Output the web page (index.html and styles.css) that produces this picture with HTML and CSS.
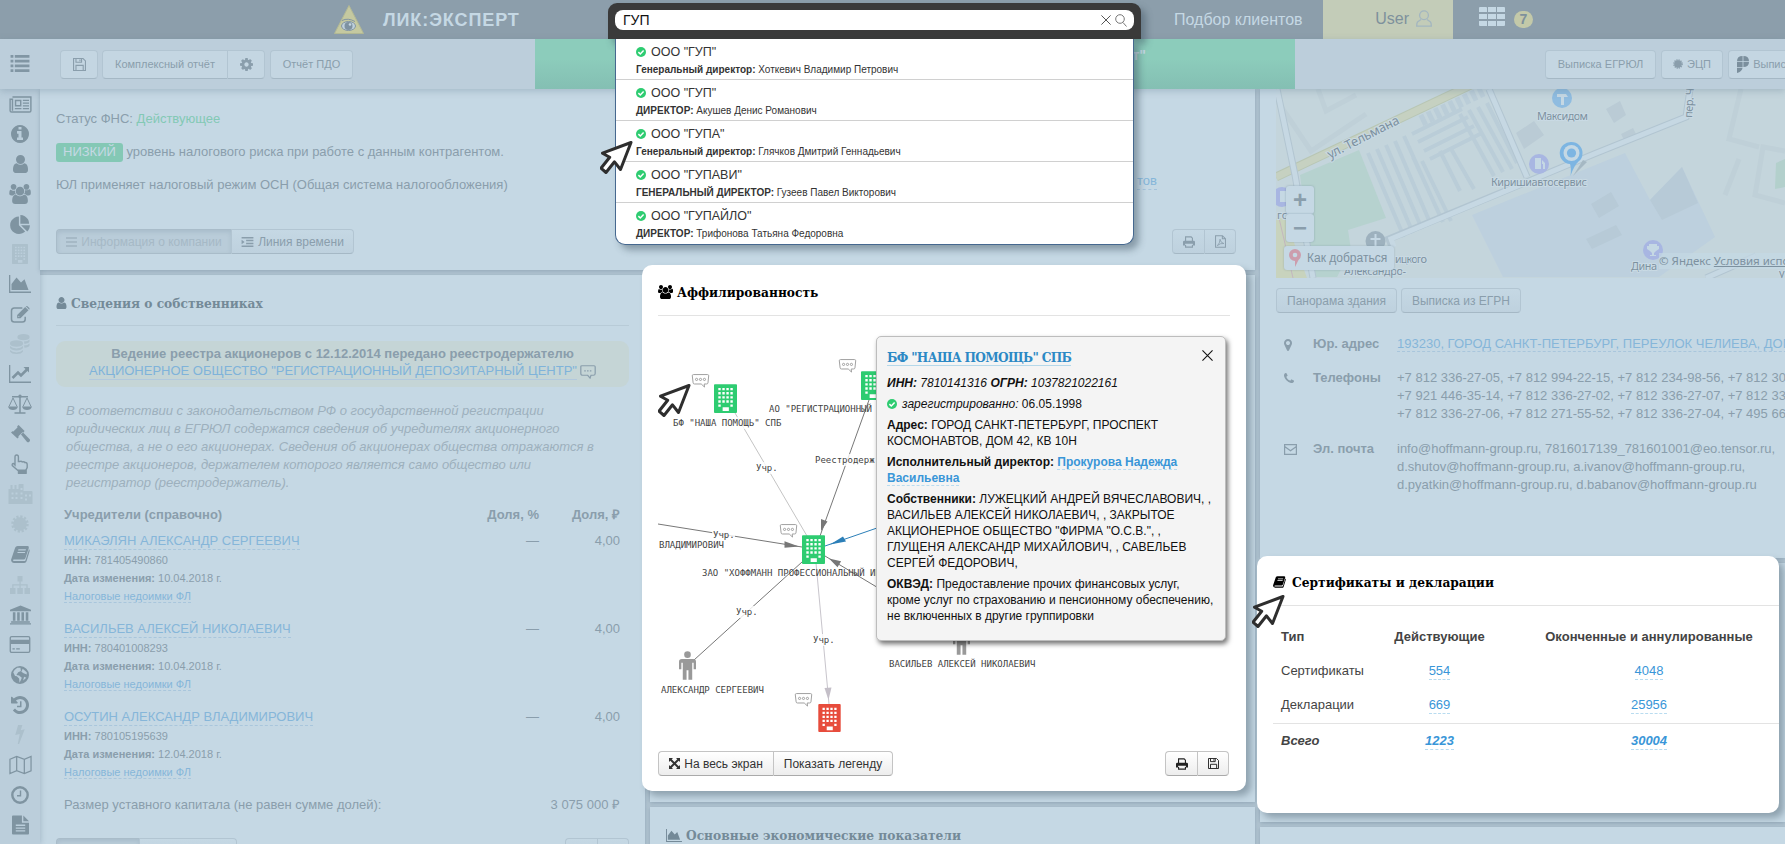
FILE: index.html
```html
<!DOCTYPE html>
<html lang="ru">
<head>
<meta charset="utf-8">
<title>ЛИК:ЭКСПЕРТ</title>
<link rel="stylesheet" href="styles.css">
</head>
<body>
<svg class="sprite" aria-hidden="true">
  <symbol id="list" viewBox="0 0 20 18"><path d="M0 0h3v3H0zM4.500 0H20v3H4.500zM0 5h3v3H0zM4.500 5H20v3H4.500zM0 10h3v3H0zM4.500 10H20v3H4.500zM0 15h3v3H0zM4.500 15H20v3H4.500z"/></symbol>
  <symbol id="news" viewBox="0 0 24 18"><path d="M3.500 1h19.500v14.500q0 1.500-1.500 1.500H2.500Q1 17 1 15.500V3.500h2.500v12" fill="none" stroke="currentColor" stroke-width="1.500"/><path fill-rule="evenodd" d="M6 4h7v7H6zM7.500 5.500v4h4v-4zM14.500 4H21v1.300h-6.500zM14.500 6.900H21v1.300h-6.500zM14.500 9.700H21V11h-6.500zM6 12.700h7V14H6zM14.500 12.700H21V14h-6.500z"/></symbol>
  <symbol id="info" viewBox="128 128 1536 1536"><path d="M1152 1376v-160q0-14-9-23t-23-9h-96v-512q0-14-9-23t-23-9h-320q-14 0-23 9t-9 23v160q0 14 9 23t23 9h96v320h-96q-14 0-23 9t-9 23v160q0 14 9 23t23 9h448q14 0 23-9t9-23zm-128-896v-160q0-14-9-23t-23-9h-192q-14 0-23 9t-9 23v160q0 14 9 23t23 9h192q14 0 23-9t9-23zm640 416q0 209-103 385.500t-279.500 279.500-385.500 103-385.500-103-279.500-279.500-103-385.500 103-385.500 279.500-279.500 385.500-103 385.500 103 279.500 279.500 103 385.500z"/></symbol>
  <symbol id="user" viewBox="256 128 1280 1536"><path d="M1536 1399q0 109-62.500 187t-150.500 78h-854q-88 0-150.500-78t-62.500-187q0-85 8.500-160.500t31.500-152 58.500-131 94-89 134.500-34.500q131 128 313 128t313-128q76 0 134.500 34.500t94 89 58.500 131 31.500 152 8.500 160.500zm-256-887q0 159-112.500 271.500t-271.500 112.500-271.500-112.500-112.500-271.500 112.500-271.500 271.500-112.500 271.500 112.500 112.500 271.500z"/></symbol>
  <symbol id="users" viewBox="-64 0 1920 1792"><path d="M529 896q-162 5-265 128h-134q-82 0-138-40.500t-56-118.500q0-353 124-353 6 0 43.500 21t97.500 42.500 119 21.500q67 0 133-23-5 37-5 66 0 159 93 287zm1071 637q0 120-73 189.500t-194 69.500h-874q-121 0-194-69.500t-73-189.500q0-53 3.500-103.500t14-109 26.500-108.500 43-97.500 62-81 85.500-53.500 111.500-20q10 0 43 21.500t73 48 107 48 135 21.500 135-21.500 107-48 73-48 43-21.500q61 0 111.500 20t85.500 53.500 62 81 43 97.500 26.500 108.500 14 109 3.500 103.500zm-1024-1277q0 106-75 181t-181 75-181-75-75-181 75-181 181-75 181 75 75 181zm704 384q0 159-112.500 271.500t-271.500 112.500-271.500-112.500-112.500-271.500 112.500-271.500 271.500-112.500 271.500 112.500 112.500 271.500zm576 225q0 78-56 118.500t-138 40.500h-134q-103-123-265-128 93-128 93-287 0-29-5-66 66 23 133 23 59 0 119-21.500t97.500-42.500 43.500-21q124 0 124 353zm-128-609q0 106-75 181t-181 75-181-75-75-181 75-181 181-75 181 75 75 181z"/></symbol>
  <symbol id="pie" viewBox="0 0 1728 1664"><path d="M768 890l546 546q-106 108-247.500 168t-298.500 60q-209 0-385.500-103t-279.500-279.500-103-385.500 103-385.500 279.500-279.500 385.500-103v762zm187 6h773q0 157-60 298.500t-168 247.500zm709-128h-768v-768q209 0 385.500 103t279.500 279.500 103 385.500z"/></symbol>
  <symbol id="building" viewBox="0 0 24 30"><path fill-rule="evenodd" d="M1 0h22q1 0 1 1v28q0 1-1 1H1q-1 0-1-1V1q0-1 1-1zM4.500 4h2.500v2.500H4.500zM8.700 4h2.500v2.500H8.700zM12.900 4h2.500v2.500h-2.500zM17.100 4h2.500v2.500h-2.500zM4.500 8.300h2.500v2.500H4.500zM8.700 8.300h2.500v2.500H8.700zM12.900 8.300h2.500v2.500h-2.500zM17.100 8.300h2.500v2.500h-2.500zM4.500 12.600h2.500v2.500H4.500zM8.700 12.600h2.500v2.500H8.700zM12.900 12.600h2.500v2.500h-2.500zM17.100 12.600h2.500v2.500h-2.500zM4.500 16.900h2.500v2.500H4.500zM8.700 16.900h2.500v2.500H8.700zM12.900 16.900h2.500v2.500h-2.500zM17.100 16.900h2.500v2.500h-2.500zM4.500 21.200h2.500v2.500H4.500zM17.100 21.200h2.500v2.500h-2.500zM9 24h6.500v4H9z"/></symbol>
  <symbol id="area" viewBox="0 0 22 18"><path d="M0 0h1.300v16.500H22V18H0zM2.500 15V9l5-6.500 4.500 5 3.500-3.200 4 10.700z"/></symbol>
  <symbol id="edit" viewBox="0 0 20 18"><path d="M12.500 2H4Q1 2 1 5v9q0 3 3 3h8.500q3 0 3-3v-2.500" fill="none" stroke="currentColor" stroke-width="1.600"/><path fill-rule="evenodd" d="M7 9.500L15.500 1l3.500 3.500-8.500 8.500H7zM8.300 10.200v1.500h1.500zM16.200.300q1-.8 2 .1l1.500 1.500q.8 1 0 2z"/></symbol>
  <symbol id="coins" viewBox="0 0 20 20"><path d="M7.500 2.500a6 2.500 0 0 1 12 0v1.200a6 2.500 0 0 1-12 0zM14 7.600q4 0 5.500-2v2q-1 2-5 2.300zM14 11.500q4 0 5.500-2v2q-1 2-5 2.300zM0 9a6.500 2.700 0 0 1 13 0v1a6.500 2.700 0 0 1-13 0zM0 12q2 2.400 6.500 2.400T13 12v2q-1.500 2.400-6.500 2.400T0 14zM0 16q2 2.400 6.500 2.400T13 16v1.500Q11.500 20 6.500 20T0 17.500z"/></symbol>
  <symbol id="line" viewBox="0 0 22 18"><path d="M0 0h1.300v16.500H22V18H0z"/><path d="M3.500 13l5.500-5.500 3 3L18 4.500" fill="none" stroke="currentColor" stroke-width="2.600"/><path d="M14.500 2H20v5.500z"/></symbol>
  <symbol id="scales" viewBox="0 0 24 20"><path d="M4 2.700h16M12 2v16.500M6.500 19h11" fill="none" stroke="currentColor" stroke-width="1.500"/><circle cx="12" cy="2.200" r="1.700"/><path d="M1 12.500L5 4l4 8.500M15 12.500L19 4l4 8.500" fill="none" stroke="currentColor"/><path d="M0 12.500h10q-1 3.500-5 3.500T0 12.500zM14 12.500h10q-1 3.500-5 3.500t-5-3.500z"/></symbol>
  <symbol id="gavel" viewBox="0 0 20 20"><path d="M6.500 1.200L8 0l6.300 6.300-1.200 1.500-1-.3-4.300 4.300.3 1-1.300 1.500L0 8l1.500-1.500 1 .4 4.300-4.300zM10.500 10l2.200-2.200 7 7.200q.8 1.300-.4 2.600-1.200 1-2.400.2z"/></symbol>
  <symbol id="hand" viewBox="0 0 18 20"><path d="M4 11V3q0-2 1.700-2t1.700 2v4.500h1.500Q10 6.700 11.500 8q1.500-.8 2.500.6 2-.4 2.200 1.900v3L15 16v3H7.500v-2L1.300 11.500Q.700 9.500 2.500 9.500z" fill="none" stroke="currentColor" stroke-width="1.400"/><path d="M7 15.500h8.500V20H7z"/></symbol>
  <symbol id="city" viewBox="0 0 24 20"><path fill-rule="evenodd" d="M0 5h2V1h2v4h2V1h2v4h2V1q0-1 1-1h4v7h8q1 0 1 1v12H0zM3 8.500v2h2v-2zM7 8.500v2h2v-2zM3 13v2h2v-2zM7 13v2h2v-2zM12 4v2h2V4zM12 8.500v2h2v-2zM12 13v2h2v-2zM16.500 10.500v2h2v-2zM16.500 14.500v2h2v-2zM20.500 10.500v2h2v-2z"/></symbol>
  <symbol id="cert" viewBox="0 0 20 20"><circle cx="10" cy="10" r="7.600"/><circle cx="10" cy="10" r="8.200" fill="none" stroke="currentColor" stroke-width="3" stroke-dasharray="2.400 1.900"/></symbol>
  <symbol id="book" viewBox="0 0 20 18"><path fill-rule="evenodd" d="M7 0h10.500q1.800.2 1.300 2l-3.600 11q-.5 1.300-2 1.300H3q-1 0-.9.700.2.900 1.500.9H14q1 0 1.300-.9L19 3.500q1 .7.700 1.900l-3.300 10.800q-.6 1.800-2.400 1.800H3.300Q0 17.700 0 14.500L4.300 1.800Q5 0 7 0zM7.800 3.500l-.4 1.200h8l.4-1.200zM7 6.300l-.4 1.200h8l.4-1.200z"/></symbol>
  <symbol id="sitemap" viewBox="0 0 20 18"><path d="M7.500 0h5v5.500h-5zM0 12h5.500v6H0zM7.300 12h5.500v6H7.300zM14.500 12H20v6h-5.500zM9.400 5h1.300v3.300h7V12h-1.400V9.600h-5.600V12H9.400V9.600H3.500V12H2.200V8.300h7.200z"/></symbol>
  <symbol id="bank" viewBox="0 0 22 20"><path d="M11 0l11 4.500V6H0V4.500zM3 7h2.700v9H3zM7.500 7h2.700v9H7.500zM12 7h2.700v9H12zM16.500 7h2.700v9h-2.700zM1.200 16.500h19.600V18H1.200zM0 18.600h22V20H0z"/></symbol>
  <symbol id="card" viewBox="0 0 22 18"><rect x=".7" y=".7" width="20.600" height="16.600" rx="1.500" fill="none" stroke="currentColor" stroke-width="1.400"/><path d="M1 4h20v4.500H1zM3 13h2.500v1.400H3zM7 13h3.800v1.400H7z"/></symbol>
  <symbol id="globe" viewBox="0 0 20 20"><path fill-rule="evenodd" d="M10 0a10 10 0 1 1 0 20a10 10 0 0 1 0-20zM4 4.500L2.500 7l2 4 2 .5L9 14l.5 4.500 1.500-3 1-2.500-3-2.500-3-.5L8 7l3-1.500-.5-3.500L7 2zM13 3l-1.500 3.500L14 8l3.500 1.500V7zM14.500 12l-1 4 3.500-3z"/></symbol>
  <symbol id="history" viewBox="128 128 1536 1536"><path d="M1664 896q0 156-61 298t-164 245-245 164-298 61q-172 0-327-72.500t-264-204.500q-7-10-6.500-22.500t8.500-20.500l137-138q10-9 25-9 16 2 23 12 73 95 179 147t225 52q104 0 198.500-40.500t163.500-109.500 109.500-163.500 40.500-198.500-40.500-198.500-109.500-163.500-163.500-109.500-198.500-40.500q-98 0-188 35.500t-160 101.500l137 138q31 30 14 69-17 40-59 40h-448q-26 0-45-19t-19-45v-448q0-42 40-59 39-17 69 14l130 129q107-101 244.500-156.500t284.500-55.500q156 0 298 61t245 164 164 245 61 298zm-640-288v448q0 14-9 23t-23 9h-320q-14 0-23-9t-9-23v-64q0-14 9-23t23-9h224v-352q0-14 9-23t23-9h64q14 0 23 9t9 23z"/></symbol>
  <symbol id="bolt" viewBox="0 0 10 20"><path d="M3 0h4.500L5.800 5.500 10 4.600 4 20H2.700l2-10.500L0 10.600z"/></symbol>
  <symbol id="map" viewBox="0 0 24 20"><path d="M1 4l7-3 8 3 7-3v15l-7 3-8-3-7 3zM8 1v15M16 4v15" fill="none" stroke="currentColor" stroke-width="1.300"/></symbol>
  <symbol id="clock" viewBox="0 0 18 18"><circle cx="9" cy="9" r="7.700" fill="none" stroke="currentColor" stroke-width="2.400"/><path d="M9.500 4.500v5.200H6" fill="none" stroke="currentColor" stroke-width="1.400"/></symbol>
  <symbol id="file" viewBox="0 0 18 20"><path fill-rule="evenodd" d="M0 1q0-1 1-1h9.500v7.500H18V19q0 1-1 1H1q-1 0-1-1zM4 9.500V11h10V9.500zM4 12.600V14h10v-1.400zM4 15.600V17h10v-1.400zM12 0l6 6h-6z"/></symbol>
  <symbol id="save" viewBox="0 0 14 14"><path d="M.6.600h10.200l2.600 2.600v10.200H.600zM3.200.600v4h6v-4M7.500 1.500v2M3.200 13.400V8h7.800v5.400" fill="none" stroke="currentColor" stroke-width="1.200"/></symbol>
  <symbol id="cog" viewBox="128 128 1536 1536"><path d="M1152 896q0-106-75-181t-181-75-181 75-75 181 75 181 181 75 181-75 75-181zm512-109v222q0 12-8 23t-20 13l-185 28q-19 54-39 91 35 50 107 138 10 12 10 25t-9 23q-27 37-99 108t-94 71q-12 0-26-9l-138-108q-44 23-91 38-16 136-29 186-7 28-36 28h-222q-14 0-24.500-8.500t-11.500-21.500l-28-184q-49-16-90-37l-141 107q-10 9-25 9-14 0-25-11-126-114-165-168-7-10-7-23 0-12 8-23 15-21 51-66.500t54-70.500q-27-50-41-99l-183-27q-13-2-21-12.500t-8-23.500v-222q0-12 8-23t19-13l186-28q14-46 39-92-40-57-107-138-10-12-10-24 0-10 9-23 26-36 98.500-107.500t94.500-71.500q13 0 26 10l138 107q44-23 91-38 16-136 29-186 7-28 36-28h222q14 0 24.500 8.500t11.500 21.500l28 184q49 16 90 37l142-107q9-9 24-9 13 0 25 10 129 119 165 170 7 8 7 22 0 12-8 23-15 21-51 66.500t-54 70.500q26 50 41 98l183 28q13 2 21 12.500t8 23.500z"/></symbol>
  <symbol id="bars" viewBox="0 0 12 11"><path d="M0 0h12v2.200H0zM0 4.400h12v2.200H0zM0 8.800h12V11H0z"/></symbol>
  <symbol id="indent" viewBox="0 0 13 11"><path d="M0 0h13v1.700H0zM5 3.100h8v1.700H5zM5 6.200h8v1.700H5zM0 9.300h13V11H0zM0 3l3.300 2.500L0 8z"/></symbol>
  <symbol id="print" viewBox="0 0 14 14"><path d="M3 6V1h6.500L11 2.600V6M3 10.500V13h8v-2.500" fill="none" stroke="currentColor" stroke-width="1.300"/><path d="M0 7q0-1.500 1.500-1.500h11Q14 5.500 14 7v4h-2.500V9h-9v2H0z"/></symbol>
  <symbol id="pdf" viewBox="0 0 12 14"><path d="M.6.600h7.500l3.300 3.300v9.500H.600zM8 .600v3.500h3.400" fill="none" stroke="currentColor" stroke-width="1.100"/><path d="M2.500 11.500Q5.500 9 5.500 4.500 6 8.500 9.700 9.200 6 8.500 2.500 11.500z" fill="none" stroke="currentColor" stroke-width=".9"/></symbol>
  <symbol id="expand" viewBox="0 0 11 11"><path d="M0 0h4L0 4zM11 0v4L7 0zM0 11V7l4 4zM11 11H7l4-4z"/><path d="M1.500 1.500l8 8M9.500 1.500l-8 8" stroke="currentColor" stroke-width="2"/></symbol>
  <symbol id="check" viewBox="0 0 10 10"><circle cx="5" cy="5" r="5"/><path d="M2.400 5.100l1.900 1.900 3.300-3.400" fill="none" stroke="#fff" stroke-width="1.500"/></symbol>
  <symbol id="marker" viewBox="384 128 1024 1536"><path d="M1152 640q0-106-75-181t-181-75-181 75-75 181 75 181 181 75 181-75 75-181zm256 0q0 109-33 179l-364 774q-16 33-47.500 52t-67.500 19-67.500-19-46.500-52l-365-774q-33-70-33-179 0-212 150-362t362-150 362 150 150 362z"/></symbol>
  <symbol id="phone" viewBox="192 128 1408 1408"><path d="M1600 1240q0 27-10 70.500t-21 68.500q-21 50-122 106-94 51-186 51-27 0-53-3.500t-57.500-12.500-47-14.500-55.500-20.500-49-18q-98-35-175-83-127-79-264-216t-216-264q-48-77-83-175-3-9-18-49t-20.500-55.500-14.500-47-12.500-57.500-3.500-53q0-92 51-186 56-101 106-122 25-11 68.500-21t70.500-10q14 0 21 3 18 6 53 76 11 19 30 54t35 63.500 31 53.500q3 4 17.500 25t21.500 35.500 7 28.500q0 20-28.500 50t-62 55-62 53-28.500 46q0 9 5 22.500t8.500 20.500 14 24 11.500 19q76 137 174 235t235 174q2 1 19 11.500t24 14 20.500 8.500 22.500 5q18 0 46-28.500t53-62 55-62 50-28.500q14 0 28.500 7t35.500 21.500 25 17.500q25 15 53.500 31t63.500 35 54 30q70 35 76 53 3 7 3 21z"/></symbol>
  <symbol id="mail" viewBox="0 0 13 11"><path d="M.6.600h11.800v9.800H.600zM.6 2.500l5.900 4.300 5.900-4.300" fill="none" stroke="currentColor" stroke-width="1.200"/></symbol>
  <symbol id="bubble" viewBox="0 0 19 15"><path d="M2 .6h15q1.300 0 1.300 1.300l-.8 7.600q-.2 1.200-1.500 1.200h-2.500l.3 3.300-3.500-3.300H3Q1.800 10.700 1.600 9.500L.700 1.900Q.700.600 2 .600z" fill="#fff" stroke="#9a9a9a" stroke-width="1"/><g fill="none" stroke="#888" stroke-width=".8"><circle cx="5.300" cy="5.800" r="1.200"/><circle cx="9.500" cy="5.800" r="1.200"/><circle cx="13.700" cy="5.800" r="1.200"/></g></symbol>
  <symbol id="chat" viewBox="0 0 17 15"><path d="M2 .8h13q1.200 0 1.200 1.200v7q0 2-2 2h-2.500l-1 3-2.500-3H3Q.8 11 .8 9V2Q.8.800 2 .800z" fill="none" stroke="currentColor" stroke-width="1.300"/><path d="M4.500 5.500h1.600V7H4.500zM7.500 5.500h1.600V7H7.500zM10.500 5.500h1.600V7h-1.600z"/></symbol>
  <symbol id="person" viewBox="0 0 18 30"><circle cx="9" cy="3.500" r="3.500"/><path d="M3 8h12q3 0 3 3v8h-2.500v-7H14v18h-4v-10H8v10H4V12H2.500v7H0v-8q0-3 3-3z"/></symbol>
  <symbol id="cursor" viewBox="0 0 33 33"><path d="M31 1.500L2.500 12.200 9.700 16.200 1 27.200 6 31.500 14.500 20.800 20.500 28.500z" fill="#fff" stroke="#2e2e2e" stroke-width="3" stroke-linejoin="round"/></symbol>
  <symbol id="cross" viewBox="0 0 12 12"><path d="M.5.500l11 11M11.500.500l-11 11" stroke="currentColor" stroke-width="1.200"/></symbol>
</svg>

<div class="page">
  <header class="top">
    <div class="brand">
      <svg width="30" height="29" viewBox="0 0 30 29"><path d="M15 .5L29.500 28.500H.5z" fill="#c5c9a0" stroke="#b3b995"/><ellipse cx="14.500" cy="21" rx="7" ry="4.500" fill="#bfd0dc" stroke="#8295a2" stroke-width="1"/><path d="M8 15.500q6-3 13 1" stroke="#8295a2" fill="none"/><circle cx="14.500" cy="21" r="4" fill="#7e92a1"/><circle cx="16" cy="19.500" r="1.300" fill="#c5d8e4"/></svg>
      <span class="brand-name">ЛИК:ЭКСПЕРТ</span>
    </div>
    <span class="clients">Подбор клиентов</span>
    <div class="account"><span>User</span><svg width="16" height="17" viewBox="0 0 16 17" fill="none" stroke="#a3b6c0" stroke-width="1.300"><circle cx="8" cy="5.200" r="4.400"/><path d="M5 9.500L1.500 12Q.700 13 .700 16.200h14.600q0-3.200-.8-4.200L11 9.500"/></svg></div>
    <svg class="apps" width="26" height="19" viewBox="0 0 26 19" fill="#c5d8e4"><path d="M0 1q0-1 1-1h6q1 0 1 1v4H0zM9 0h8v5H9zM18 0h7q1 0 1 1v4h-8zM0 7h8v5H0zM9 7h8v5H9zM18 7h8v5h-8zM0 14h8v5H1q-1 0-1-1zM9 14h8v5H9zM18 14h8v4q0 1-1 1h-7z"/></svg>
    <span class="count">7</span>
  </header>

  <div class="tools">
    <div class="menu-btn"><svg width="20" height="17"><use href="#list"/></svg></div>
    <span class="btn b-save"><svg width="13" height="13"><use href="#save"/></svg></span>
    <div class="group"><span class="btn b-complex">Комплексный отчёт</span><span class="btn b-cog"><svg width="13" height="13"><use href="#cog"/></svg></span></div>
    <span class="btn b-pdo">Отчёт ПДО</span>
    <div class="company">т"</div>
    <span class="btn b-egrul">Выписка ЕГРЮЛ</span>
    <span class="btn b-ecp"><svg width="10" height="10"><use href="#cert"/></svg>ЭЦП</span>
    <span class="btn b-more"><svg width="12" height="17" viewBox="0 0 12 17" fill="#7b8f9d"><path d="M0 5.300Q0 0 5.600 0v5.300zM6.400 0Q12 0 12 5.300H6.400zM6.400 6H12q0 5-5.600 5zM0 6h5.600v5H0zM0 11.700h5.600Q5 15.500 0 17z"/></svg>Выписка ЕГРН</span>
  </div>

  <div class="body">
    <nav class="side">
      <i><svg width="23" height="17"><use href="#news"/></svg></i>
      <i><svg width="18" height="18"><use href="#info"/></svg></i>
      <i><svg width="17" height="18"><use href="#user"/></svg></i>
      <i><svg width="22" height="20"><use href="#users"/></svg></i>
      <i><svg width="20" height="19"><use href="#pie"/></svg></i>
      <i class="off"><svg width="16" height="20"><use href="#building"/></svg></i>
      <i><svg width="22" height="18"><use href="#area"/></svg></i>
      <i><svg width="20" height="17"><use href="#edit"/></svg></i>
      <i class="off"><svg width="20" height="20"><use href="#coins"/></svg></i>
      <i><svg width="22" height="18"><use href="#line"/></svg></i>
      <i><svg width="24" height="20"><use href="#scales"/></svg></i>
      <i><svg width="19" height="19"><use href="#gavel"/></svg></i>
      <i><svg width="18" height="20"><use href="#hand"/></svg></i>
      <i class="off"><svg width="25" height="20"><use href="#city"/></svg></i>
      <i class="off"><svg width="18" height="18"><use href="#cert"/></svg></i>
      <i><svg width="19" height="17"><use href="#book"/></svg></i>
      <i class="off"><svg width="20" height="18"><use href="#sitemap"/></svg></i>
      <i><svg width="21" height="20"><use href="#bank"/></svg></i>
      <i><svg width="22" height="17"><use href="#card"/></svg></i>
      <i><svg width="18" height="18"><use href="#globe"/></svg></i>
      <i><svg width="18" height="18"><use href="#history"/></svg></i>
      <i class="off"><svg width="10" height="19"><use href="#bolt"/></svg></i>
      <i><svg width="23" height="20"><use href="#map"/></svg></i>
      <i><svg width="18" height="18"><use href="#clock"/></svg></i>
      <i><svg width="17" height="20"><use href="#file"/></svg></i>
    </nav>

    <main class="main">
      <section class="panel status">
        <p>Статус ФНС: <span class="ok">Действующее</span></p>
        <p class="risk"><span class="badge">НИЗКИЙ</span> уровень налогового риска при работе с данным контрагентом.</p>
        <p class="mode">ЮЛ применяет налоговый режим ОСН (Общая система налогообложения)</p>
        <span class="more-link">тов</span>
        <div class="row">
          <div class="group"><span class="btn down b-info"><svg width="11" height="10"><use href="#bars"/></svg>Информация о компании</span><span class="btn b-line"><svg width="13" height="10"><use href="#indent"/></svg>Линия времени</span></div>
          <div class="group"><span class="btn b-ico"><svg width="12" height="12"><use href="#print"/></svg></span><span class="btn b-ico"><svg width="11" height="13"><use href="#pdf"/></svg></span></div>
        </div>
      </section>

      <div class="cols">
        <section class="panel owners">
          <h2 class="title"><svg width="11" height="12"><use href="#user"/></svg>Сведения о собственниках</h2>
          <div class="notice"><b>Ведение реестра акционеров с 12.12.2014 передано реестродержателю</b><div><span class="lnk">АКЦИОНЕРНОЕ ОБЩЕСТВО "РЕГИСТРАЦИОННЫЙ ДЕПОЗИТАРНЫЙ ЦЕНТР"</span><svg width="16" height="14"><use href="#chat"/></svg></div></div>
          <p class="law">В соответствии с законодательством РФ о государственной регистрации<br>юридических лиц в ЕГРЮЛ содержатся сведения об учредителях акционерного<br>общества, а не о его акционерах. Сведения об акционерах общества отражаются в<br>реестре акционеров, держателем которого является само общество или<br>регистратор (реестродержатель).</p>
          <div class="own head"><span>Учредители (справочно)</span><span class="pct">Доля, %</span><span class="rub">Доля, ₽</span></div>
          <div class="own"><span class="lnk">МИКАЭЛЯН АЛЕКСАНДР СЕРГЕЕВИЧ</span><span class="pct">—</span><span class="rub">4,00</span></div>
          <div class="det"><b>ИНН:</b> 781405490860<br><b>Дата изменения:</b> 10.04.2018 г.<br><span class="lnk">Налоговые недоимки ФЛ</span></div>
          <div class="own"><span class="lnk">ВАСИЛЬЕВ АЛЕКСЕЙ НИКОЛАЕВИЧ</span><span class="pct">—</span><span class="rub">4,00</span></div>
          <div class="det"><b>ИНН:</b> 780401008293<br><b>Дата изменения:</b> 10.04.2018 г.<br><span class="lnk">Налоговые недоимки ФЛ</span></div>
          <div class="own"><span class="lnk">ОСУТИН АЛЕКСАНДР ВЛАДИМИРОВИЧ</span><span class="pct">—</span><span class="rub">4,00</span></div>
          <div class="det"><b>ИНН:</b> 780105195639<br><b>Дата изменения:</b> 12.04.2018 г.<br><span class="lnk">Налоговые недоимки ФЛ</span></div>
          <div class="own"><span>Размер уставного капитала (не равен сумме долей):</span><span class="rub">3 075 000 ₽</span></div>
          <div class="row foot">
            <div class="group"><span class="btn down f1"></span><span class="btn f2"></span></div>
            <div class="group"><span class="btn b-ico"></span><span class="btn b-ico"></span></div>
          </div>
        </section>
        <div class="midcol">
          <section class="panel blank"></section>
          <section class="panel econ"><h2 class="title"><svg width="16" height="13"><use href="#area"/></svg>Основные экономические показатели</h2></section>
        </div>
      </div>
    </main>

    <aside class="right">
      <section class="panel contact">
        <div class="map">
          <svg width="509" height="189" viewBox="0 0 509 189">
            <rect width="509" height="189" fill="#c4d5dc"/>
            <g fill="none" stroke="#bfd0d8" stroke-width="5"><path d="M0 10L35 62 90 25M42 0l8 22 30-16M465 0l-12 50 30 8M509 62l-22-4-8 48 30 8M463 70l-14 36"/></g>
            <path d="M24 86L83 61l27 68-38 12 3 20-14 27H38z" fill="#b6d2cf"/>
            <path d="M196 126L349 64l25 47 32-33 33 70-56 40H227z" fill="#bdd0de"/>
            <path d="M374 111l32-33 16 36-36 17zM315 115l20-12 8 14-20 12zM310 150l30-14 6 10-30 14z" fill="#b7cad7"/>
            <path d="M500 74l9-4v28l-10 2z" fill="#b3d0cc"/>
            <path d="M240 44l18-12 10 14-20 14zM330 20l14-8 6 14-12 8zM345 45l12-6 3 6-12 6z" fill="#bacbd5"/>
            <g fill="none" stroke="#bacdd8" stroke-width="4"><path d="M92 64l36 84M101 60l36 84M110 56l36 84M119 52l36 84M128 47l36 80M137 68l30 65M146 72l29 60"/><path d="M136 45l50-25M142 53l50-25M148 62l50-25M154 70l50-25M184 25l34 62M193 21l34 62M202 18l34 62M211 14l30 60M164 62l20 40M174 58l24 42"/><path d="M145 32l62-30" stroke-width="11" stroke-dasharray="5 3"/></g>
            <path d="M0 88L195-4" stroke="#b8c6b4" stroke-width="9"/><path d="M0 88L195-4" stroke="#c6d1c1" stroke-width="7"/>
            <path d="M0 129h9l22 60H0z" fill="#c8d3bd"/><path d="M3 129l14 60" stroke="#c3b6bf"/>
            <g fill="none"><path d="M1 0l18 86 18 103M213 0l38 88M116 158l-3-8 205-85 92-37 4-28M430 189l50-22" stroke="#b2c5d1" stroke-width="7"/><path d="M1 0l18 86 18 103M213 0l38 88M118 158l-3-8 203-85 92-37 4-28M430 189l50-22" stroke="#c6d8e3" stroke-width="5"/></g>
            <circle cx="286" cy="9" r="10" fill="#8fbce0"/><path d="M281 5h9l2 3h-4v8h-3V8h-4z" fill="#c5d8e4"/>
            <circle cx="263" cy="75" r="10" fill="#a8b6e2"/><path d="M259 69h6v11h-6zM266 71l3 3v6h-2v-5h-1z" fill="#c5d8e4"/>
            <circle cx="6" cy="108" r="10" fill="#a8b6e2"/><path d="M4 102h6v11H4z" fill="#c5d8e4"/>
            <circle cx="99.500" cy="152" r="10" fill="#9db1be"/><path d="M98.500 145h2v4h4v2h-4v8h-2v-8h-4v-2h4z" fill="#c5d8e4"/>
            <circle cx="377" cy="161" r="10" fill="#a8b6e2"/><path d="M373 155h8v2h2v3l-3 2-2 2v2h2v1h-6v-1h2v-2l-2-2-3-2v-3h2z" fill="#c5d8e4"/>
            <path d="M297 87l14-14-4-2z" fill="#a5b8c3"/><path d="M295.500 53a11 11 0 0 1 11 11q0 6-4 8.500-4.500 4-8 14.500 1-8-.500-12a11 11 0 0 1 1.500-22z" fill="#7db5e2"/><circle cx="295.500" cy="64" r="8" fill="#c5d8e4"/><circle cx="295.500" cy="64" r="4.600" fill="#7db5e2"/>
            <g class="map-text">
              <text x="261" y="31" textLength="51">Максидом</text>
              <text x="215" y="97" textLength="96">Киришиавтосервис</text>
              <text x="119" y="174" textLength="32">ицкого</text>
              <text x="68" y="186" textLength="62">Александро-</text>
              <text x="355" y="181" textLength="26">Дина</text>
              <text x="1" y="130">гс</text>
              <text x="503" y="188">у</text>
              <text transform="translate(54 70) rotate(-27)" font-size="13" textLength="79">ул. Тельмана</text>
              <text transform="translate(416 29) rotate(-86)" textLength="30">пер. Ч</text>
            </g>
          </svg>
          <div class="zoomer"><span>+</span><span>−</span></div>
          <div class="route"><svg width="12" height="18" viewBox="0 0 12 18"><path d="M6 0a6 6 0 0 1 6 6q0 3-2.500 5L6 18V12A6 6 0 0 1 6 0z" fill="#cc9dad"/><circle cx="6" cy="6" r="2.300" fill="#c5d8e4"/></svg>Как добраться</div>
          <div class="copy">© Яндекс <u>Условия использования</u></div>
        </div>
        <div class="mapbtns"><span class="btn m1">Панорама здания</span><span class="btn m2">Выписка из ЕГРН</span></div>
        <div class="info-row"><span class="ic"><svg width="8" height="12"><use href="#marker"/></svg></span><b>Юр. адрес</b><div><span class="lnk">193230, ГОРОД САНКТ-ПЕТЕРБУРГ, ПЕРЕУЛОК ЧЕЛИЕВА, ДОМ 13</span></div></div>
        <div class="info-row"><span class="ic"><svg width="10" height="10"><use href="#phone"/></svg></span><b>Телефоны</b><div>+7 812 336-27-05, +7 812 994-22-15, +7 812 234-98-56, +7 812 305-10-12,<br>+7 921 446-35-14, +7 812 336-27-02, +7 812 336-27-07, +7 812 336-27-01,<br>+7 812 336-27-06, +7 812 271-55-52, +7 812 336-27-04, +7 495 660-11-00</div></div>
        <div class="info-row"><span class="ic"><svg width="13" height="11"><use href="#mail"/></svg></span><b>Эл. почта</b><div>info@hoffmann-group.ru, 7816017139_781601001@eo.tensor.ru,<br>d.shutov@hoffmann-group.ru, a.ivanov@hoffmann-group.ru,<br>d.pyatkin@hoffmann-group.ru, d.babanov@hoffmann-group.ru</div></div>
      </section>
      <section class="panel certs-under"></section>
      <section class="panel rest"></section>
    </aside>
  </div>

  <div class="search">
    <div class="field"><span>ГУП</span><svg width="10" height="10"><use href="#cross"/></svg><svg width="12" height="13" viewBox="0 0 12 13" fill="none" stroke="#777"><circle cx="5" cy="5" r="4.300"/><path d="M8 8.500l3.500 4"/></svg></div>
    <div class="hits">
      <div class="hit"><p><svg width="10" height="10"><use href="#check"/></svg>ООО "ГУП"</p><small><b>Генеральный директор:</b> Хоткевич Владимир Петрович</small></div>
      <div class="hit"><p><svg width="10" height="10"><use href="#check"/></svg>ООО "ГУП"</p><small><b>ДИРЕКТОР:</b> Акушев Денис Романович</small></div>
      <div class="hit"><p><svg width="10" height="10"><use href="#check"/></svg>ООО "ГУПА"</p><small><b>Генеральный директор:</b> Глячков Дмитрий Геннадьевич</small></div>
      <div class="hit"><p><svg width="10" height="10"><use href="#check"/></svg>ООО "ГУПАВИ"</p><small><b>ГЕНЕРАЛЬНЫЙ ДИРЕКТОР:</b> Гузеев Павел Викторович</small></div>
      <div class="hit"><p><svg width="10" height="10"><use href="#check"/></svg>ООО "ГУПАЙЛО"</p><small><b>ДИРЕКТОР:</b> Трифонова Татьяна Федоровна</small></div>
    </div>
  </div>

  <section class="card affil">
    <h2 class="title"><svg width="15" height="14"><use href="#users"/></svg>Аффилированность</h2>
    <div class="graph">
      <svg width="572" height="436" viewBox="658 316 572 436">
        <g fill="none" stroke-width="1">
          <path d="M735 413L807 536" stroke="#c4c4c4"/>
          <path d="M869 400L820 536M658 524l144 23M825 556l55 33M802 562L694 660" stroke="#777"/>
          <path d="M877 528l-52 18" stroke="#2c7fb8"/>
          <path d="M816 563l13 141" stroke="#c8c5cc"/>
        </g>
        <path d="M821 531l0-12 6.500 2.400zM799 546.500l-14.500-5.300v6.500zM829 558.500l8.500 8.800 3.600-6z" fill="#777"/><path d="M830 544.500l13-8 3 5z" fill="#2c7fb8"/><path d="M828.500 700l-4-12 7-.5z" fill="#c4bfc8"/>
        <g fill="#fff"><path d="M755 462h24v12h-24zM815 454h62v12h-62zM712 529h23v12h-23zM735 606h23v12h-23zM812 634h23v12h-23zM673 417h108v12H673z" fill-opacity=".8"/></g>
        <g fill="#2ecc71"><use href="#building" x="714" y="384" width="23" height="29"/><use href="#building" x="861" y="371" width="23" height="29"/><use href="#building" x="802" y="535" width="23" height="29"/></g>
        <use href="#building" x="818" y="704" width="23" height="28" fill="#e74c3c"/>
        <use href="#bubble" x="691" y="374" width="19" height="14"/><use href="#bubble" x="838" y="359" width="19" height="14"/><use href="#bubble" x="779" y="524" width="19" height="14"/><use href="#bubble" x="794" y="693" width="19" height="14"/>
        <g fill="#999"><use href="#person" x="679" y="651" width="17" height="29"/><use href="#person" x="953" y="626" width="17" height="29"/></g>
        <g class="node">
          <text x="673" y="426">БФ "НАША ПОМОЩЬ" СПБ</text>
          <text x="769" y="412">АО "РЕГИСТРАЦИОННЫЙ</text>
          <text x="659" y="548">ВЛАДИМИРОВИЧ</text>
          <text x="702" y="576">ЗАО "ХОФФМАНН ПРОФЕССИОНАЛЬНЫЙ ИН</text>
          <text x="661" y="693">АЛЕКСАНДР СЕРГЕЕВИЧ</text>
          <text x="889" y="667">ВАСИЛЬЕВ АЛЕКСЕЙ НИКОЛАЕВИЧ</text>
          <text x="756" y="471">Учр.</text><text x="815" y="463">Реестродерж.</text><text x="713" y="538">Учр.</text><text x="736" y="615">Учр.</text><text x="813" y="643">Учр.</text>
        </g>
      </svg>
    </div>
    <div class="row">
      <div class="group"><span class="btn a1"><svg width="11" height="11"><use href="#expand"/></svg>На весь экран</span><span class="btn a2">Показать легенду</span></div>
      <div class="group"><span class="btn b-ico"><svg width="12" height="12"><use href="#print"/></svg></span><span class="btn b-ico"><svg width="11" height="11"><use href="#save"/></svg></span></div>
    </div>
    <div class="pop">
      <svg class="close" width="11" height="11"><use href="#cross"/></svg>
      <h3><span>БФ "НАША ПОМОЩЬ" СПБ</span></h3>
      <p><i><b>ИНН:</b> 7810141316 <b>ОГРН:</b> 1037821022161</i></p>
      <p><svg class="green" width="10" height="10"><use href="#check"/></svg><i>зарегистрированно:</i> 06.05.1998</p>
      <p><b>Адрес:</b> ГОРОД САНКТ-ПЕТЕРБУРГ, ПРОСПЕКТ<br>КОСМОНАВТОВ, ДОМ 42, КВ 10Н</p>
      <p><b>Исполнительный директор: <span class="alink">Прокурова Надежда<br>Васильевна</span></b></p>
      <p><b>Собственники:</b> ЛУЖЕЦКИЙ АНДРЕЙ ВЯЧЕСЛАВОВИЧ, ,<br>ВАСИЛЬЕВ АЛЕКСЕЙ НИКОЛАЕВИЧ, , ЗАКРЫТОЕ<br>АКЦИОНЕРНОЕ ОБЩЕСТВО "ФИРМА "О.С.В.", ,<br>ГЛУЩЕНЯ АЛЕКСАНДР МИХАЙЛОВИЧ, , САВЕЛЬЕВ<br>СЕРГЕЙ ФЕДОРОВИЧ,</p>
      <p><b>ОКВЭД:</b> Предоставление прочих финансовых услуг,<br>кроме услуг по страхованию и пенсионному обеспечению,<br>не включенных в другие группировки</p>
    </div>
  </section>

  <section class="card certs">
    <h2 class="title"><svg width="13" height="12"><use href="#book"/></svg>Сертификаты и декларации</h2>
    <div class="ct th"><span>Тип</span><span>Действующие</span><span>Оконченные и аннулированные</span></div>
    <div class="ct"><span>Сертификаты</span><span><a>554</a></span><span><a>4048</a></span></div>
    <div class="ct"><span>Декларации</span><span><a>669</a></span><span><a>25956</a></span></div>
    <div class="ct total"><span>Всего</span><span><a>1223</a></span><span><a>30004</a></span></div>
  </section>

  <svg class="cur c1" width="33" height="33"><use href="#cursor"/></svg>
  <svg class="cur c2" width="33" height="33"><use href="#cursor"/></svg>
  <svg class="cur c3" width="33" height="33"><use href="#cursor"/></svg>
</div>
</body>
</html>
```
FILE: styles.css
```css
* { box-sizing: border-box; }
body { margin: 0; font: 13px/18px "Liberation Sans", Arial, sans-serif; color: #8a9eac; }
p, h2, h3 { margin: 0; }
svg { flex: none; }
svg:not([fill]) { fill: currentColor; }
.sprite { position: absolute; width: 0; height: 0; }
.page { position: relative; width: 1785px; height: 844px; overflow: hidden; background: #b3c6d3; }

/* header */
.top { display: flex; align-items: center; height: 39px; background: #8c9eab; color: #c5d8e4; white-space: nowrap; }
.brand { display: flex; align-items: center; gap: 19px; width: 1174px; padding-left: 334px; flex: none; }
.brand-name { font-size: 18px; font-weight: bold; letter-spacing: .9px; }
.clients { width: 149px; flex: none; font-size: 16px; }
.account { display: flex; align-items: center; justify-content: flex-end; gap: 7px; width: 130px; flex: none; height: 39px; padding: 0 21px 2px 0; background: #c3ccb8; color: #7e919c; font-size: 16px; }
.apps { margin: 0 9px 6px 26px; }
.count { width: 19px; height: 17px; border-radius: 9px; background: #c3c9a9; color: #7e919c; font-weight: bold; font-size: 14px; line-height: 17px; text-align: center; }

/* toolbar */
.tools { position: relative; z-index: 1; display: flex; align-items: center; height: 50px; background: #bccedb; box-shadow: 0 2px 7px rgba(100,125,145,.35); overflow-x: clip; white-space: nowrap; }
.tools > * { flex: none; }
.menu-btn { width: 60px; padding: 0 0 1px 10px; color: #8196a4; line-height: 0; }
.btn { display: inline-flex; align-items: center; justify-content: center; gap: 4px; height: 25px; border: 1px solid #b2c5d2; border-bottom-color: #a5b8c5; border-radius: 4px; background: linear-gradient(#c5d8e4, #bed1de); font-size: 12px; white-space: nowrap; flex: none; }
.group { display: flex; }
.group .btn:first-child { border-radius: 4px 0 0 4px; border-right: 0; }
.group .btn:last-child { border-radius: 0 4px 4px 0; }
.btn.down { background: #b9ccd9; color: #a6b9c6; border-color: #a9bcc9; box-shadow: inset 0 2px 4px rgba(100,125,145,.2); }
.tools .btn { height: 29px; font-size: 11px; background: #c4d6e2; }
.b-save { width: 38px; margin-right: 4px; }
.b-complex { width: 125px; }
.b-cog { width: 38px; }
.b-pdo { width: 83px; margin-left: 5px; }
.company { width: 760px; height: 50px; margin: 0 250px 0 182px; padding: 7px 149px 0 0; background: linear-gradient(#8cccbb 40%, #84bfb3); color: #c5d8e4; font-size: 14px; text-align: right; font-weight: bold; }
.b-egrul { width: 111px; }
.b-ecp { width: 62px; margin: 0 5px; }
.b-more { width: 110px; }

.body { display: flex; height: 755px; }
.side { width: 40px; flex: none; background: #bbcedb; color: #7f94a1; box-shadow: 1px 0 5px rgba(100,125,145,.3); z-index: 0; }
.side i { display: flex; height: 30.040px; align-items: center; justify-content: center; }
.side .off { color: #acc0cc; }
.panel { flex: none; background: #c5d8e4; box-shadow: 0 1px 4px rgba(90,115,135,.4); }
.main { width: 1215px; flex: none; display: flex; flex-direction: column; gap: 5px; }
.row { display: flex; justify-content: space-between; }
.b-ico { width: 32px; }

.status { position: relative; height: 181px; padding: 21px 19px 0 16px; }
.ok { color: #83c9b5; }
.risk { margin-top: 15px; }
.badge { display: inline-block; height: 19px; padding: 0 7px; margin-right: 0; border-radius: 3px; background: #84c8b5; color: #c5d8e4; }
.mode { margin: 14px 0 35px; }
.more-link { position: absolute; right: 98px; top: 84px; color: #86b6d9; border-bottom: 1px dashed #a5c3dc; line-height: 16px; }
.b-info { width: 175px; }
.b-line { width: 123px; }

.cols { display: flex; gap: 5px; }
.owners { width: 605px; height: 600px; padding: 19px 16px 0; }
.title { display: flex; align-items: center; gap: 4px; height: 18px; font: bold 13.600px/18px "DejaVu Serif", serif; font-stretch: condensed; color: #748a98; white-space: nowrap; }
.owners .title { height: 32px; padding-bottom: 14px; border-bottom: 1px solid #b8cbd7; }
.notice { height: 46px; margin: 15px 0; padding-top: 4px; border-radius: 9px; background: #c5d5d6; text-align: center; white-space: nowrap; }
.notice div { display: flex; justify-content: center; align-items: center; gap: 3px; }
.lnk { color: #86b6d9; border-bottom: 1px dashed #a9c6dc; line-height: 16px; }
.notice .lnk { border-bottom-style: solid; border-color: #b2c9dd; color: #7fb3da; }
.law { padding-left: 10px; font-style: italic; color: #9db0bd; white-space: nowrap; margin-bottom: 14px; }
.own { display: flex; padding: 0 9px 0 8px; white-space: nowrap; height: 18px; align-items: baseline; }
.own.head { font-weight: bold; margin-bottom: 8px; }
.own > :first-child { margin-right: auto; }
.rub { width: 81px; text-align: right; }
.det { margin: 1px 0 15px; padding-left: 8px; font-size: 11px; }
.foot { margin-top: 24px; }
.f1 { width: 83px; } .f2 { width: 98px; }
.midcol { width: 605px; display: flex; flex-direction: column; gap: 5px; }
.blank { height: 527px; }
.econ { height: 60px; padding: 19px 16px; }

/* right column */
.right { margin-left: 5px; width: 525px; flex: none; display: flex; flex-direction: column; gap: 5px; }
.contact { height: 469px; padding-left: 16px; overflow: hidden; }
.certs-under { height: 259px; }
.rest { height: 60px; }
.map { position: relative; height: 189px; }
.map-text { font: 11px "Noto Sans", sans-serif; fill: #7d919f; paint-order: stroke; stroke: #c9dae4; stroke-width: 2px; }
.map svg { display: block; }
.zoomer { position: absolute; left: 10px; top: 97px; width: 28px; }
.zoomer span { display: block; height: 28px; background: #c5d8e4; border-radius: 3px; box-shadow: 0 0 2px rgba(90,115,135,.5); font: bold 24px/27px "Liberation Sans", sans-serif; text-align: center; }
.route { position: absolute; left: 8px; top: 157px; display: flex; gap: 6px; align-items: center; width: 110px; height: 24px; padding-left: 5px; border-radius: 3px; background: #c5d8e4; box-shadow: 0 0 2px rgba(90,115,135,.4); color: #7d919f; white-space: nowrap; font-size: 12px; }
.copy { position: absolute; left: 383px; top: 164px; font: 11.500px/16px "Noto Sans", sans-serif; color: #7d919f; white-space: nowrap; background: rgba(197,216,228,.7); }
.mapbtns { display: flex; gap: 4px; margin: 10px 0 22px; }
.m1 { width: 121px; } .m2 { width: 120px; }
.info-row { display: flex; white-space: nowrap; margin-bottom: 16px; padding-left: 8px; }
.info-row > * { flex: none; }
.info-row .ic { width: 29px; padding-top: 1px; }
.info-row .ic svg { display: block; margin-top: 3px; }
.info-row b { width: 84px; }
.info-row + .info-row { margin-bottom: 17px; }

/* search */
.search { position: absolute; z-index: 5; left: 608px; top: 3px; width: 533px; height: 36px; padding: 7px 7px 0; border-radius: 9px 9px 0 0; background: #3a3a3a; box-shadow: 5px 5px 7px rgba(60,80,95,.45); }
.field { display: flex; align-items: center; gap: 4px; height: 20px; padding: 0 7px 0 8px; border-radius: 8px; background: #fff; color: #111; font-size: 14px; }
.field span { margin-right: auto; }
.field svg { color: #555; }
.hits { margin-top: 9px; height: 206px; border: 1px solid #46688f; border-top: 0; border-radius: 0 0 10px 10px; background: #fff; box-shadow: 5px 5px 7px rgba(60,80,95,.45); color: #333; white-space: nowrap; }
.hit { height: 41px; padding: 4px 0 0 20px; border-bottom: 1px solid #d0d0d0; }
.hit:last-child { border-bottom: 0; }
.hit p { display: flex; align-items: center; gap: 5px; font-size: 12.500px; }
.hit svg, .green { color: #2ecc71; }
.hit small { display: block; font-size: 10px; line-height: 18px; }

/* raised cards */
.card { position: absolute; background: #fff; border-radius: 10px; box-shadow: 5px 5px 7px rgba(60,80,95,.4); color: #444; }
.card .title { color: #000; }
.affil { left: 642px; top: 265px; width: 604px; height: 526px; padding: 18px 16px 0; }
.affil .title { height: 33px; padding-bottom: 14px; border-bottom: 1px solid #e3e3e3; }
.graph { height: 435px; }
.graph svg { display: block; }
.node { font: 9px "DejaVu Sans Mono", monospace; fill: #444; }
.card .btn { background: linear-gradient(#fff, #ededed); border-color: #c4c4c4; border-bottom-color: #aaa; color: #333; }
.card .b-ico svg { color: #222; }
.affil .row { padding-right: 1px; }
.a1 { width: 115px; } .a2 { width: 120px; }
.pop { position: absolute; left: 234px; top: 71px; width: 350px; height: 305px; padding: 11px 10px; background: #f4f4f4; border: 1px solid #bdbdbd; border-radius: 5px; box-shadow: 2px 3px 5px rgba(0,0,0,.55); color: #111; font-size: 12px; line-height: 16px; white-space: nowrap; }
.pop h3 { font: bold 13.500px/18px "DejaVu Serif", serif; font-stretch: condensed; letter-spacing: -.65px; color: #2c89c5; margin-bottom: 9px; }
.pop h3 span { border-bottom: 1px solid #b5d8ea; }
.pop p { margin-bottom: 5px; }
.pop p .green { margin-right: 5px; vertical-align: -1px; }
.close { position: absolute; right: 12px; top: 13px; }
.alink, .ct a { color: #3996d8; border-bottom: 1px dashed #b9dcf0; }

.certs { left: 1257px; top: 556px; width: 522px; height: 257px; padding: 17px 0 0 16px; }
.certs .title { height: 33px; padding-bottom: 14px; border-bottom: 1px solid #e3e3e3; margin-bottom: 14px; gap: 6px; }
.ct { display: grid; grid-template-columns: 110px 97px 1fr; height: 34px; line-height: 34px; padding-left: 8px; }
.ct span + span { text-align: center; }
.ct a { display: inline-block; line-height: 16px; }
.ct span:last-child { padding-left: 31px; }
.th { font-weight: bold; white-space: nowrap; }
.total { border-top: 1px solid #e3e3e3; font-weight: bold; font-style: italic; margin-top: 1px; }
.cur { position: absolute; z-index: 9; }
.c1 { left: 600px; top: 141px; }
.c2 { left: 658px; top: 384px; }
.c3 { left: 1252px; top: 595px; }
```
